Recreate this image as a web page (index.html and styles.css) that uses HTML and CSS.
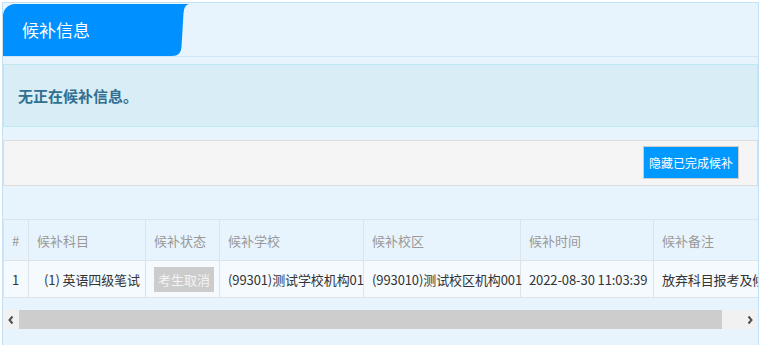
FILE: index.html
```html
<!DOCTYPE html>
<html lang="zh-CN">
<head>
    <meta charset="UTF-8">
    <meta name="viewport" content="width=device-width, initial-scale=1.0">
    <title>候补信息</title>
    <link rel="stylesheet" href="styles.css">
</head>
<body>
    <div class="panel">
        <div class="panel-head">
            <div class="tab">
                <svg class="tab-bg" width="188" height="52" viewBox="0 0 188 52">
                    <path d="M12 0 H186 Q181 1 180.5 9 L178.5 43 Q178 52 169 52 H0 V12 A12 12 0 0 1 12 0 Z" fill="#0090ff"/>
                </svg>
                <span class="tab-title">候补信息</span>
            </div>
        </div>

        <div class="panel-body">
            <div class="alert">无正在候补信息。</div>

            <div class="toolbar">
                <button type="button" class="btn-primary">隐藏已完成候补</button>
            </div>

            <div class="table-wrap">
                <table class="grid">
                    <colgroup>
                        <col style="width: 25px">
                        <col style="width: 117px">
                        <col style="width: 74px">
                        <col style="width: 144px">
                        <col style="width: 157px">
                        <col style="width: 133px">
                        <col style="width: 220px">
                    </colgroup>
                    <thead>
                        <tr>
                            <th>#</th>
                            <th>候补科目</th>
                            <th>候补状态</th>
                            <th>候补学校</th>
                            <th>候补校区</th>
                            <th>候补时间</th>
                            <th>候补备注</th>
                        </tr>
                    </thead>
                    <tbody>
                        <tr>
                            <td>1</td>
                            <td class="subject">(1) 英语四级笔试</td>
                            <td><span class="status-tag">考生取消</span></td>
                            <td>(99301)测试学校机构01</td>
                            <td>(993010)测试校区机构001</td>
                            <td>2022-08-30 11:03:39</td>
                            <td>放弃科目报考及候补</td>
                        </tr>
                    </tbody>
                </table>
            </div>

            <div class="scrollbar">
                <div class="sb-arrow">
                    <svg width="8" height="10" viewBox="0 0 8 10"><polyline points="5.5,1.5 2.5,5 5.5,8.5" fill="none" stroke="#505050" stroke-width="2"/></svg>
                </div>
                <div class="sb-thumb"></div>
                <div class="sb-track"></div>
                <div class="sb-arrow">
                    <svg width="8" height="10" viewBox="0 0 8 10"><polyline points="2.5,1.5 5.5,5 2.5,8.5" fill="none" stroke="#505050" stroke-width="2"/></svg>
                </div>
            </div>
        </div>
    </div>
</body>
</html>
```

FILE: styles.css
```css
body {
    margin: 0;
    font-family: "Noto Sans CJK SC", sans-serif;
    font-size: 13px;
    color: #333;
    background-color: #fff;
}
.panel {
    margin: 2px 0 0 2px;
    width: 757px;
    height: 343px;
    box-sizing: border-box;
    border: 1px solid #c2e1f7;
    border-bottom: none;
    background-color: #e8f4fd;
    overflow: hidden;
}
.panel-head {
    height: 54px;
    padding-top: 1px;
    box-sizing: border-box;
    border-bottom: 1px solid #cfe7f7;
}
.tab {
    position: relative;
    width: 188px;
    height: 52px;
    display: flex;
    align-items: center;
}
.tab-bg {
    position: absolute;
    left: 0;
    top: 0;
}
.tab-title {
    position: relative;
    padding-left: 19px;
    font-size: 17px;
    line-height: 22px;
    color: #fff;
}
.panel-body {
    padding-top: 7px;
}
.alert {
    padding: 20px 14px;
    font-size: 15px;
    line-height: 21px;
    font-weight: bold;
    color: #31708f;
    background-color: #d9edf7;
    border: 1px solid #bce8f1;
}
.toolbar {
    margin-top: 13px;
    padding: 5px 18px 6px 0;
    display: flex;
    justify-content: flex-end;
    background-color: #f5f5f5;
    border: 1px solid #ddd;
}
.btn-primary {
    width: 96px;
    height: 33px;
    padding: 0;
    font-family: inherit;
    font-size: 12px;
    color: #fff;
    background-color: #0099ff;
    border: 1px solid #ccc;
    cursor: pointer;
}
.table-wrap {
    margin-top: 33px;
    overflow: hidden;
}
.grid {
    width: 870px;
    table-layout: fixed;
    border-collapse: collapse;
}
.grid th,
.grid td {
    padding: 0 2px 0 8px;
    text-align: left;
    white-space: nowrap;
    border: 1px solid #dce4ea;
}
.grid th {
    height: 40px;
    font-weight: normal;
    color: #999;
}
.grid td {
    height: 36px;
    color: #333;
    letter-spacing: -0.1px;
    background-color: #f5fafe;
}
.grid td.subject {
    padding-left: 15px;
}
.status-tag {
    display: inline-block;
    padding: 3px 4px;
    line-height: 19px;
    letter-spacing: 0;
    color: #f4f4f4;
    background-color: #ccc;
}
.scrollbar {
    margin-top: 12px;
    height: 19px;
    display: flex;
    background-color: #f1f1f1;
}
.sb-arrow {
    width: 16px;
    display: flex;
    align-items: center;
    justify-content: center;
}
.sb-thumb {
    width: 703px;
    background-color: #cdcdcd;
}
.sb-track {
    flex: 1;
}
```
